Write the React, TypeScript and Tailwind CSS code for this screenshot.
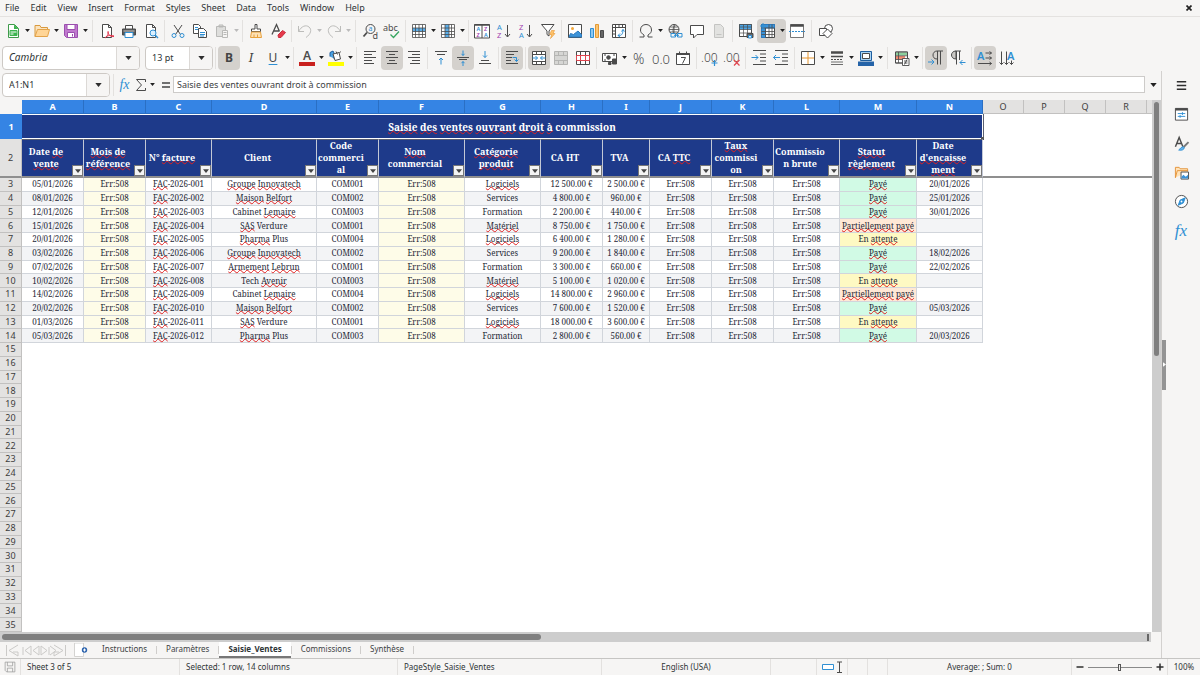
import clsx from "clsx";
import { useState } from "react";
import type { ReactNode } from "react";

const INK = "#4b4b4b";
const BLUE = "#2f8fd3";

const MENUS = ["File", "Edit", "View", "Insert", "Format", "Styles", "Sheet", "Data", "Tools", "Window", "Help"];
const TABS = ["Instructions", "Paramètres", "Saisie_Ventes", "Commissions", "Synthèse"];

// words between underscores get the spell-check wave
const COLUMNS = [
  { id: "A", width: "w-[62px]", title: "Date _de_ _vente_" },
  { id: "B", width: "w-[62px]", title: "_Mois_ _de_ _référence_" },
  { id: "C", width: "w-[66px]", title: "N° _facture_" },
  { id: "D", width: "w-[105px]", title: "Client" },
  { id: "E", width: "w-[62px]", title: "Code commercial" },
  { id: "F", width: "w-[86px]", title: "_Nom_ commercial" },
  { id: "G", width: "w-[76px]", title: "_Catégorie_ _produit_" },
  { id: "H", width: "w-[62px]", title: "CA HT" },
  { id: "I", width: "w-[47px]", title: "TVA" },
  { id: "J", width: "w-[62px]", title: "CA _TTC_" },
  { id: "K", width: "w-[62px]", title: "_Taux_ commission" },
  { id: "L", width: "w-[66px]", title: "Commission brute" },
  { id: "M", width: "w-[77px]", title: "_Statut_ _règlement_" },
  { id: "N", width: "w-[66px]", title: "Date _d'encaissement_" },
];
const EXTRA_COLUMNS = ["O", "P", "Q", "R"];

const SALES = [
  ["05/01/2026", "001", "_Groupe_ _Innovatech_", "COM001", "_Logiciels_", "12 500.00 €", "2 500.00 €", "_Payé_", "20/01/2026"],
  ["08/01/2026", "002", "_Maison_ _Belfort_", "COM002", "Services", "4 800.00 €", "960.00 €", "_Payé_", "25/01/2026"],
  ["12/01/2026", "003", "Cabinet _Lemaire_", "COM003", "Formation", "2 200.00 €", "440.00 €", "_Payé_", "30/01/2026"],
  ["15/01/2026", "004", "_SAS_ Verdure", "COM001", "_Matériel_", "8 750.00 €", "1 750.00 €", "_Partiellement_ _payé_", ""],
  ["20/01/2026", "005", "_Pharma_ Plus", "COM004", "_Logiciels_", "6 400.00 €", "1 280.00 €", "En _attente_", ""],
  ["03/02/2026", "006", "_Groupe_ _Innovatech_", "COM002", "Services", "9 200.00 €", "1 840.00 €", "_Payé_", "18/02/2026"],
  ["07/02/2026", "007", "_Armement_ _Lebrun_", "COM001", "Formation", "3 300.00 €", "660.00 €", "_Payé_", "22/02/2026"],
  ["10/02/2026", "008", "Tech _Avenir_", "COM003", "_Matériel_", "5 100.00 €", "1 020.00 €", "En _attente_", ""],
  ["14/02/2026", "009", "Cabinet _Lemaire_", "COM004", "_Logiciels_", "14 800.00 €", "2 960.00 €", "_Partiellement_ _payé_", ""],
  ["20/02/2026", "010", "_Maison_ _Belfort_", "COM002", "Services", "7 600.00 €", "1 520.00 €", "_Payé_", "05/03/2026"],
  ["01/03/2026", "011", "_SAS_ Verdure", "COM001", "_Logiciels_", "18 000.00 €", "3 600.00 €", "En _attente_", ""],
  ["05/03/2026", "012", "_Pharma_ Plus", "COM003", "Formation", "2 800.00 €", "560.00 €", "_Payé_", "20/03/2026"],
];

const EMPTY_ROWS = Array.from({ length: 21 }, (_, i) => i + 15);

const STATUS_COLORS: Record<string, string> = {
  _Payé_: "bg-[#d1fae5]",
  "En _attente_": "bg-[#fef9c3]",
  "_Partiellement_ _payé_": "bg-[#ffe8d6]",
};

const page = <path d="M3.5 1.5h6l3 3v10h-9z M9.5 1.5v3h3" fill="#fff" />;

const ICONS: Record<string, ReactNode> = {
  new: (
    <>
      <path d="M3.500 1.500h6l4 4v9h-10z" fill="#fff" stroke="#3f9a4b" />
      <path d="M9 1.500l4.500 4.500H9z" fill="#3cb44e" stroke="none" />
      <path d="M5 7.500h7v5H5z" fill="#3cb44e" stroke="#3cb44e" />
      <path d="M5.500 9h6M5.500 11h3" stroke="#fff" />
    </>
  ),
  open: (
    <>
      <path d="M1 13.500v-11h5l1 2h6.500v2" fill="#fbe3bd" stroke="#d99a3e" />
      <path d="M1 13.500l2.500-7H15.500l-2 7z" fill="#ffd596" stroke="#e3a349" />
    </>
  ),
  save: (
    <>
      <path d="M1.500 1.500h13v13h-11l-2-2z" fill="#c079ce" stroke="#9b4fae" />
      <path d="M4 1.500h8v5H4z M4.500 9.500h7v5h-7z" fill="#fff" stroke="#9b4fae" />
      <path d="M9.500 11v2.500" stroke="#9b4fae" />
    </>
  ),
  pdf: (
    <>
      {page}
      <path d="M6 15c3-2 3.500-5 3-7M9 9c0 3 3 5 6 4.500M6 15c1-2 5-3.500 9-2" stroke="#e3324a" />
    </>
  ),
  print: (
    <>
      <path d="M4.500 6V2.500h7V6" fill="#fff" />
      <path d="M1.500 6h13v6h-13z" fill="#5a5a5a" />
      <path d="M4 9.500h8v5H4z" fill="#fff" stroke={BLUE} />
      <path d="M2.500 8h11" stroke="#c8c8c8" />
    </>
  ),
  preview: (
    <>
      {page}
      <circle cx="10" cy="10" r="3" fill="#d9efff" stroke={BLUE} />
      <path d="M12.300 12.300L15 15" stroke={BLUE} strokeWidth="1.500" />
    </>
  ),
  cut: (
    <>
      <path d="M4 2l6.500 9.500M12 2L5.500 11.500" />
      <circle cx="4" cy="12.500" r="2" stroke={BLUE} />
      <circle cx="12" cy="12.500" r="2" stroke={BLUE} />
    </>
  ),
  copy: (
    <>
      <path d="M1.500 1.500h5l2 2v7h-7z" fill="#fff" />
      <path d="M3 4.500h3M3 6.500h3" stroke={BLUE} />
      <path d="M6.500 5.500h5l3 3v6h-8z" fill="#fff" />
      <path d="M8 9.500h5M8 11.500h5M8 13h4" stroke={BLUE} />
    </>
  ),
  paste: (
    <g stroke="#b9b9b7">
      <path d="M2.500 3.500h9v10h-9z M5 2h4v2H5z" fill="#dededc" />
      <path d="M8.500 7.500h5v7h-5z M9.500 9.500h3M9.500 11.500h3" fill="#f6f5f4" />
    </g>
  ),
  clone: (
    <>
      <path d="M7 1.500h2v4.500h3.500v2.500h-9V6H7z" fill="#fff" />
      <path d="M3.500 9h9l1 5.500H2.500z" fill="#fde1b5" stroke="#e8a13c" />
      <path d="M6 14v-2.500M9.500 14v-2.500" stroke="#e8a13c" />
    </>
  ),
  clear: (
    <>
      <path d="M2 11.500L6.500 1.500l3 7M3.800 8h5" strokeWidth="1.300" />
      <path d="M8 12l4.500-4.500 3 2L11 14.500H8.500z" fill="#e5394b" stroke="#c92f40" />
    </>
  ),
  undo: <path d="M1.500 3v5.500h5.500M1.500 8.500C4.500 3 9 1.500 12 4s2 7-3 10.500" stroke="#bcbcba" />,
  redo: <path d="M14.500 3v5.500H9M14.500 8.500C11.500 3 7 1.500 4 4s-2 7 3 10.500" stroke="#bcbcba" />,
  find: (
    <>
      <circle cx="8.500" cy="6" r="4.500" />
      <path d="M5 9.500L1.500 13.500" strokeWidth="1.800" />
      <text x="6.500" y="8.300" fontSize="7" fill={BLUE} stroke="none">a</text>
      <text x="10.500" y="15.500" fontSize="9" fill={INK} stroke="none">d</text>
    </>
  ),
  spell: (
    <>
      <text x="-1" y="7.500" fontSize="9" fill={INK} stroke="none">abc</text>
      <path d="M6.500 11.500l3 3 5.500-6" stroke="#37a660" strokeWidth="1.300" />
    </>
  ),
  row: (
    <>
      <path d="M1.500 1.500h13v13h-13z" fill="#fff" stroke="none" />
      <path d="M1.500 5h13v3.500h-13z" fill="#5aaeea" stroke="none" />
      <path d="M1.500 1.500h13v13h-13z M1.500 5h13 M1.500 8.500h13 M1.500 11.500h13 M4.500 1.500v13 M8 1.500v13 M11.500 1.500v13" strokeWidth=".8" />
    </>
  ),
  col: (
    <>
      <path d="M1.500 1.500h13v13h-13z" fill="#fff" stroke="none" />
      <path d="M5 1.500h4v13H5z" fill="#5aaeea" stroke="none" />
      <path d="M1.500 1.500h13v13h-13z M1.500 5h13 M1.500 8.500h13 M1.500 11.500h13 M5 1.500v13 M9 1.500v13 M11.500 1.500v13" strokeWidth=".8" />
    </>
  ),
  sort: (
    <>
      <path d="M.500 1.500h15v13.500H.500z M8 2v13" fill="#fff" />
      <path d="M.500 2h15" strokeWidth="1.500" />
      <g fontSize="5.500" fontWeight="600" stroke="none">
        <text x="2.500" y="8" fill={BLUE}>A</text>
        <text x="2.500" y="14" fill="#a13fb0">Z</text>
        <text x="10" y="8" fill="#a13fb0">Z</text>
        <text x="10" y="14" fill={BLUE}>A</text>
      </g>
    </>
  ),
  az: (
    <>
      <text x="1" y="7" fontSize="7.500" fill={BLUE} stroke="none">A</text>
      <text x="1" y="15" fontSize="7.500" fill="#a13fb0" stroke="none">Z</text>
      <path d="M11.500 2v11.500M9 11l2.500 3 2.500-3" />
    </>
  ),
  za: (
    <>
      <text x="1" y="7" fontSize="7.500" fill="#a13fb0" stroke="none">Z</text>
      <text x="1" y="15" fontSize="7.500" fill={BLUE} stroke="none">A</text>
      <path d="M11.500 2v11.500M9 11l2.500 3 2.500-3" />
    </>
  ),
  filter: (
    <>
      <path d="M1.500 1.500h12.500l-5 6.500v5l-2-1.500V8z" fill="#fff" />
      <path d="M11.500 7.500h3l-1.500 3h2l-4.500 5 1.300-4H9.800z" fill="#ffc36b" stroke="#e8962e" strokeWidth=".6" />
    </>
  ),
  image: (
    <>
      <path d="M1.500 1.500h13v13h-13z" fill="#fff" />
      <circle cx="5.500" cy="5.500" r="1.500" fill="#f2a73b" stroke="none" />
      <path d="M2 14l1.500-3.500 3 1L11 8l3.500 3.500V14z" fill="#3c93d8" stroke="#2a7abf" />
    </>
  ),
  chart: (
    <>
      <path d="M1.500 5.500h3v9h-3z" fill="#8cc8f2" stroke={BLUE} />
      <path d="M6.500 1.500h3v13h-3z" fill="#fbc573" stroke="#e39a35" />
      <path d="M11.500 7.500h3v7h-3z" fill="#666" />
    </>
  ),
  pivot: (
    <>
      <path d="M1.500 1.500h13v13h-13z M1.500 4.500h13 M4.500 1.500v13 M8 1.500v3 M11.500 1.500v3 M1.500 8h3 M1.500 11h3" fill="#fff" />
      <path d="M7 12.500c4 .5 5-2 5-6M7 12.500l2-2M7 12.500l2 1.500M12 6.500L10.500 8.500M12 6.500l1.500 2" stroke={BLUE} />
    </>
  ),
  omega: <path d="M1.500 14h4.500v-2C3.500 10.500 2.500 9 2.500 7c0-3.500 2.500-5.500 5.500-5.500S13.500 3.500 13.500 7c0 2-1 3.500-3.500 5v2h4.500" />,
  link: (
    <>
      <circle cx="7" cy="6.500" r="5" />
      <path d="M2 6.500h10M7 1.500v10M3 4h8M3 9h8" strokeWidth=".8" />
      <path d="M8.500 1.800c-3 3-3 6.500-1.500 9.500" strokeWidth=".8" />
      <path d="M4 10.500h4.500v3.500H4zM10.500 10.500H15v3.500h-4.500zM7 12.300h5" fill="#f6f5f4" stroke={BLUE} />
    </>
  ),
  comment: <path d="M1.500 2.500h13v9H8l-3.500 3.500v-3.500h-3z" fill="#fff" />,
  headers: <path d="M3.500 1.500h6l3 3v10h-9z M5.500 11.500h5" fill="#e2e2e0" stroke="#c4c4c2" />,
  printarea: (
    <>
      <path d="M1.500 1.500h12v12h-12z" fill="#fff" />
      <path d="M1.500 1.500h12v5h-12z" fill="#4ba3e3" stroke="none" />
      <path d="M1.500 1.500h12v12h-12z M1.500 4h12 M1.500 6.500h12 M1.500 10h12 M5.500 1.500v12 M9.500 1.500v12" strokeWidth=".7" />
      <path d="M9 10.500h6v4H9z" fill="#666" />
      <path d="M10.500 12.500h3v2.500h-3z" fill="#d9efff" stroke={BLUE} />
    </>
  ),
  freeze: (
    <>
      <path d="M1.500 1.500h13v13h-13z" fill="#fff" />
      <path d="M1.500 1.500h13v3.500H5.500v9.500h-4z" fill="#3c93d8" stroke="#2a7abf" />
      <path d="M5.500 5v9.500M9 1.500v13M12 1.500v13M1.500 5h13M1.500 8.500h13M1.500 11.500h13" strokeWidth=".8" />
      <path d="M3 0v6M0 3h6" stroke={BLUE} />
    </>
  ),
  split: (
    <>
      <path d="M1.500 1.500h13v13h-13z" fill="#fff" stroke="#777" />
      <path d="M1.500 2.500h13" strokeWidth="2.500" />
      <path d="M0 8.500h16" stroke={BLUE} strokeDasharray="2 1" />
    </>
  ),
  shapes: (
    <>
      <circle cx="10.500" cy="5.500" r="4" fill="#fff" />
      <path d="M1.500 5.500h7v7h-7z" fill="#fff" />
      <path d="M9.500 6l4.500 4.500L9.500 15 5 10.500z" fill="#fff" />
    </>
  ),
  alignleft: <path d="M2 1.500h12M2 4.500h8M2 7.500h12M2 10.500h8M2 13.500h10" />,
  aligncenter: <path d="M2 1.500h12M5 4.500h6M2 7.500h12M5 10.500h6M3 13.500h10" />,
  alignright: <path d="M2 1.500h12M6 4.500h8M2 7.500h12M6 10.500h8M4 13.500h10" />,
  top: (
    <>
      <path d="M2 1.500h12M4 4.500h8" />
      <path d="M8 14.500V8M6 10l2-2 2 2" stroke={BLUE} />
    </>
  ),
  middle: (
    <>
      <path d="M2 7.500h12M4 9.500h8" />
      <path d="M8 .500v5M6.500 3.800L8 5.500l1.500-1.700M8 16v-4.500M6.500 13.200L8 11.500l1.500 1.700" stroke={BLUE} />
    </>
  ),
  bottom: (
    <>
      <path d="M2 13.500h12M4 10.500h8" />
      <path d="M8 1v6.500M6 5.500l2 2 2-2" stroke={BLUE} />
    </>
  ),
  wrap: (
    <>
      <path d="M2 1.500h12M2 4.500h8M2 7.500h6M2 10.500h5M2 13.500h12" />
      <path d="M8.500 7.500h4v4M10.500 9.500l2 2 2-2" stroke={BLUE} />
    </>
  ),
  mergecenter: (
    <>
      <path d="M1.500 1.500h13v13h-13z M1.500 4.500h13 M1.500 11.500h13 M5.500 1.500v3 M10.500 1.500v3 M5.500 11.500v3 M10.500 11.500v3" fill="#fff" />
      <path d="M1.500 8h5M9.500 8h5M4.500 6l2 2-2 2M11.500 6l-2 2 2 2" stroke={BLUE} />
    </>
  ),
  merge: <path d="M1.500 1.500h13v13h-13z M1.500 5.500h13 M1.500 10.500h13 M5.500 1.500v4 M10.500 1.500v4 M5.500 10.500v4 M10.500 10.500v4" fill="#d6d6d4" stroke="#b5b5b3" />,
  unmerge: (
    <>
      <path d="M1.500 1.500h13v13h-13z M5.500 1.500v4 M10.500 1.500v4" fill="#fff" />
      <path d="M1.500 5.500h13v5h-13z M5.500 5.500v5M10.500 5.500v5" stroke="#e0454f" />
      <path d="M5.500 11v3.500M10.500 11v3.500" />
    </>
  ),
  currency: (
    <>
      <path d="M.500 3.500h14v8H.500z" fill="#fff" />
      <circle cx="6.500" cy="7.500" r="1.800" fill={INK} />
      <path d="M10.500 9h4v5h-4z M6.500 12.500h2.500v2H6.500z" fill={INK} />
      <path d="M2 5h2M11 5h2M2 10h2" />
    </>
  ),
  percent: <text x="2" y="13.500" fontSize="14" fontWeight="300" fill={INK} stroke="none">%</text>,
  number: <text x="-1" y="13.500" fontSize="13" fontWeight="300" fill={INK} stroke="none">0.0</text>,
  date: (
    <>
      <path d="M1.500 3.500h13v11h-13z M4.500 1.500v2 M11.500 1.500v2" fill="#fff" />
      <path d="M1.500 4h13" strokeWidth="2" />
      <path d="M6 7.500h4.500l-3 6" />
    </>
  ),
  adddec: (
    <>
      <text x="-1" y="12" fontSize="12" fontWeight="300" fill={INK} stroke="none">.00</text>
      <path d="M12.500 10v6M9.500 13h6" stroke={BLUE} strokeWidth="1.200" />
    </>
  ),
  deldec: (
    <>
      <text x="-1" y="12" fontSize="12" fontWeight="300" fill={INK} stroke="none">.00</text>
      <path d="M10 10l5.500 5.500M15.500 10L10 15.500" stroke="#e0454f" strokeWidth="1.200" />
    </>
  ),
  indent: (
    <>
      <path d="M2 .500h13M9 4h6M9 7.500h6M9 11h6M2 14.500h13" />
      <path d="M.500 7.500h6.500M4.500 5l2.500 2.500L4.500 10" stroke={BLUE} />
    </>
  ),
  dedent: (
    <>
      <path d="M2 .500h13M9 4h6M9 7.500h6M9 11h6M2 14.500h13" />
      <path d="M.500 7.500h6.500M3 5L.500 7.500 3 10" stroke={BLUE} />
    </>
  ),
  borders: (
    <>
      <path d="M1.500 1.500h13v13h-13z" fill="#fff" />
      <path d="M8 2v12M2 8h12" stroke="#e8962e" />
    </>
  ),
  linestyle: (
    <>
      <path d="M2 2.500h12" strokeWidth="2.500" />
      <path d="M2 6.500h12" strokeWidth="1.500" />
      <path d="M2 9.500h12" strokeDasharray="2 1" />
      <path d="M2 12h12M2 14.500h12" strokeWidth=".8" />
    </>
  ),
  linecolor: (
    <>
      <path d="M2.500 1.500h11v9h-11z" fill="#a9d4f5" stroke="#1d5d9e" />
      <path d="M4.500 3.500h7v5h-7z" fill="#fff" />
      <path d="M0 11.500h16V16H0z" fill="#2563a8" stroke="none" />
    </>
  ),
  conditional: (
    <>
      <path d="M1.500 2h12v11h-12z" fill="#fff" />
      <path d="M2 2.500h11v3H2z" fill="#8ccf9b" stroke="none" />
      <path d="M2 6h9v3.500H2z" fill="#f08a72" stroke="none" />
      <path d="M1.500 2h12v11h-12z M1.500 5.800h12 M1.500 9.500h12 M4.500 2v11" strokeWidth=".8" />
      <path d="M8.500 8.500h6.500v7H8.500z M10 11h3.500M10 13h3.500M13 9.500l-2.500 5" fill="#fff" strokeWidth=".9" />
    </>
  ),
  ltr: (
    <>
      <path d="M9 9C6 9 5 7 5 5s1.500-4 4-4h6M9.500 1v13.500M12.500 1v13.500" />
      <path d="M0 12h6M3.500 9.500L6 12l-2.500 2.500" stroke={BLUE} />
    </>
  ),
  rtl: (
    <>
      <path d="M6 1v8C3 9 1.500 7 1.500 5S3 1 6 1z" fill="#c9c7c4" />
      <path d="M5.500 1H11M6.500 1v13.500M9.500 1v9" />
      <path d="M10 12.500h5.500M12.500 10L10 12.500l2.500 2.500" stroke={BLUE} />
    </>
  ),
  horizontaltext: (
    <>
      <text x="0" y="9.500" fontSize="11" fontWeight="600" fill={BLUE} stroke="none">A</text>
      <path d="M8.500 3h6M8.500 8h6M1 13.500h13.500M12.500 1.500L14.500 3l-2 1.500M12.500 6.500l2 1.500-2 1.500M12.500 12l2 1.500-2 1.500" />
    </>
  ),
  verticaltext: (
    <>
      <text x="8" y="9.500" fontSize="11" fontWeight="600" fill={BLUE} stroke="none">A</text>
      <path d="M2.500 1.500v13M7.500 1.500v13M12.500 10.500v4M.500 12.500l2 2 2-2M5.500 12.500l2 2 2-2M10.500 12.500l2 2 2-2" />
    </>
  ),
  fontcolor: (
    <>
      <text x="4" y="10" fontSize="12" fontWeight="600" fill={INK} stroke="none">A</text>
      <path d="M0 12h16v4H0z" fill="#c9211e" stroke="none" />
    </>
  ),
  highlight: (
    <>
      <path d="M2 6.500V2.500l3-1.500 1 2v5.500" stroke="#1d5d9e" fill="#4ba3e3" />
      <path d="M5 4l6-1.500 1.500 6.500L7 10.500z M8 1.500l1.500 3 M11.500 3l1-1.500" fill="#fff" />
      <path d="M0 12h16v4H0z" fill="#ffff00" stroke="none" />
    </>
  ),
  hamburger: <path d="M3 4h10M3 8h10M3 12h10" stroke="#2e2e2e" strokeWidth="1.500" />,
  properties: (
    <>
      <path d="M1.500 1.500h13v12.500h-13z" fill="#fff" />
      <path d="M1.500 2.500h13" strokeWidth="2.500" />
      <path d="M4 7h8M4 10h8M9 5.500v3M6.500 8.500v3" stroke={BLUE} />
    </>
  ),
  styles: (
    <>
      <path d="M1.500 11.500L5.500 1.500l4 10M3 8h5" strokeWidth="1.500" />
      <path d="M15.500 6.500l-6 6" stroke="#777" strokeWidth="2" />
      <path d="M10 11.500c-2.500 0-3 2-5 3.500 3 .5 5.500 0 6-2.500z" fill="#6bb6ec" stroke={BLUE} />
    </>
  ),
  gallery: (
    <>
      <path d="M1.500 13.500v-11h4l1 1.500h8v3M1.500 13.500L3.500 6h11.500" fill="#ffe2b8" stroke="#e3933a" />
      <path d="M7.500 7.500h8v7.500h-8z" fill="#fff" />
      <path d="M8 14.500v-2l2-2 2.500 2 2.500-2v4z" fill="#3c93d8" stroke="none" />
    </>
  ),
  navigator: (
    <>
      <circle cx="8" cy="8" r="6.500" fill="#fff" />
      <path d="M12 4l-2 5.500L4.500 12l2-5.500z" fill={BLUE} stroke={BLUE} />
      <circle cx="8" cy="8" r="1" fill="#fff" stroke="none" />
    </>
  ),
  floppy: <path d="M1.500 1.500h13v13h-11l-2-2zM4.500 1.500v5h7v-5M4.500 14.500v-5h7v5" stroke="#999" />,
};

type ToolDef = { icon: string; label: string; caret?: boolean; active?: boolean; disabled?: boolean };
const sep = (wide = false) => ({ sep: true as const, wide });

const STANDARD: (ToolDef | { sep: true; wide: boolean })[] = [
  { icon: "new", label: "New", caret: true },
  { icon: "open", label: "Open", caret: true },
  { icon: "save", label: "Save", caret: true },
  sep(true),
  { icon: "pdf", label: "Export as PDF" },
  { icon: "print", label: "Print" },
  { icon: "preview", label: "Print preview" },
  sep(),
  { icon: "cut", label: "Cut" },
  { icon: "copy", label: "Copy" },
  { icon: "paste", label: "Paste", caret: true, disabled: true },
  sep(),
  { icon: "clone", label: "Clone formatting" },
  { icon: "clear", label: "Clear formatting" },
  sep(),
  { icon: "undo", label: "Undo", caret: true, disabled: true },
  { icon: "redo", label: "Redo", caret: true, disabled: true },
  sep(true),
  { icon: "find", label: "Find and replace" },
  { icon: "spell", label: "Spelling" },
  sep(),
  { icon: "row", label: "Row", caret: true },
  { icon: "col", label: "Column", caret: true },
  sep(),
  { icon: "sort", label: "Sort" },
  { icon: "az", label: "Sort ascending" },
  { icon: "za", label: "Sort descending" },
  { icon: "filter", label: "AutoFilter" },
  sep(),
  { icon: "image", label: "Insert image" },
  { icon: "chart", label: "Insert chart" },
  { icon: "pivot", label: "Pivot table" },
  sep(),
  { icon: "omega", label: "Special character", caret: true },
  { icon: "link", label: "Hyperlink" },
  { icon: "comment", label: "Comment" },
  { icon: "headers", label: "Headers and footers", disabled: true },
  sep(),
  { icon: "printarea", label: "Define print area" },
  { icon: "freeze", label: "Freeze rows and columns", caret: true, active: true },
  { icon: "split", label: "Split window" },
  sep(true),
  { icon: "shapes", label: "Draw functions" },
];

const FORMATTING: typeof STANDARD = [
  { icon: "fontcolor", label: "Font color", caret: true },
  { icon: "highlight", label: "Background color", caret: true },
  sep(),
  { icon: "alignleft", label: "Align left" },
  { icon: "aligncenter", label: "Align center", active: true },
  { icon: "alignright", label: "Align right" },
  sep(),
  { icon: "top", label: "Align top" },
  { icon: "middle", label: "Center vertically", active: true },
  { icon: "bottom", label: "Align bottom" },
  sep(),
  { icon: "wrap", label: "Wrap text", active: true },
  sep(),
  { icon: "mergecenter", label: "Merge and center cells", active: true },
  { icon: "merge", label: "Merge cells", disabled: true },
  { icon: "unmerge", label: "Unmerge cells" },
  sep(),
  { icon: "currency", label: "Currency", caret: true },
  { icon: "percent", label: "Percent" },
  { icon: "number", label: "Number" },
  { icon: "date", label: "Date" },
  sep(),
  { icon: "adddec", label: "Add decimal place" },
  { icon: "deldec", label: "Delete decimal place" },
  sep(),
  { icon: "indent", label: "Increase indent" },
  { icon: "dedent", label: "Decrease indent" },
  sep(),
  { icon: "borders", label: "Borders", caret: true },
  { icon: "linestyle", label: "Border style", caret: true },
  { icon: "linecolor", label: "Border color", caret: true },
  sep(true),
  { icon: "conditional", label: "Conditional formatting", caret: true },
  sep(),
  { icon: "ltr", label: "Left-to-right", active: true },
  { icon: "rtl", label: "Right-to-left" },
  sep(),
  { icon: "horizontaltext", label: "Text direction from left to right", active: true },
  { icon: "verticaltext", label: "Text direction from top to bottom" },
];

function Icon({ name, className = "w-4 h-4" }: { name: string; className?: string }) {
  return (
    <svg viewBox="0 0 16 16" className={clsx("shrink-0 overflow-visible", className)} fill="none" stroke={INK} aria-hidden="true">
      {ICONS[name]}
    </svg>
  );
}

function Caret({ className = "w-[5px] h-[3px] text-[#222]" }: { className?: string }) {
  return (
    <svg viewBox="0 0 8 5" className={clsx("shrink-0", className)} fill="currentColor" aria-hidden="true">
      <path d="M0 0h8L4 5z" />
    </svg>
  );
}

function Tool({ icon, label, caret, active, disabled }: ToolDef) {
  return (
    <div className={clsx("flex items-center rounded-sm", active && "bg-[#d4d1cd]")}>
      <button type="button" aria-label={label} disabled={disabled} className="w-[22px] h-6 flex items-center justify-center">
        <Icon name={icon} />
      </button>
      {caret && (
        <button type="button" aria-label={`${label} options`} disabled={disabled} className="w-[7px] h-6 flex items-center justify-center">
          <Caret className={clsx("w-[5px] h-[3px]", disabled ? "text-[#bbb]" : "text-[#222]")} />
        </button>
      )}
    </div>
  );
}

function Separator({ wide }: { wide?: boolean }) {
  return (
    <div className={clsx("flex justify-center", wide ? "w-[7px]" : "w-[5px]")}>
      <div className="w-px h-[22px] bg-[#e3e1df]" />
    </div>
  );
}

function Tools({ items }: { items: typeof STANDARD }) {
  return (
    <>
      {items.map((item, i) => ("sep" in item ? <Separator key={i} wide={item.wide} /> : <Tool key={item.icon} {...item} />))}
    </>
  );
}

function Combo({ label, value, width, italic }: { label: string; value: string; width: string; italic?: boolean }) {
  return (
    <div className={clsx("flex h-6 border border-[#cdc9c5] rounded bg-white overflow-hidden", width)}>
      <input
        aria-label={label}
        defaultValue={value}
        className={clsx("flex-1 min-w-0 px-[6px] text-[#2e3436] outline-none", italic ? "italic text-[10px]" : "text-[9px]")}
      />
      <button type="button" aria-label={`${label} list`} className="w-[23px] flex items-center justify-center border-l border-[#dcd9d6] bg-[#f6f5f4]">
        <Caret className="w-[7px] h-[4px] text-[#2e2e2e]" />
      </button>
    </div>
  );
}

function Spelled({ text }: { text: string }) {
  return (
    <>
      {text.split("_").map((part, i) =>
        i % 2 ? (
          <span key={i} className="underline decoration-wavy decoration-[#e02020] decoration-1 [text-underline-offset:-1px] [text-decoration-skip-ink:none]">
            {part}
          </span>
        ) : (
          part
        )
      )}
    </>
  );
}

function RowNumber({ n }: { n: number }) {
  return (
    <th scope="row" className="p-0 bg-[#e3e2e1] border-b border-r border-[#c2c1c0] font-normal font-['Noto_Sans',sans-serif] text-[9px] leading-[12px] text-[#3d3d3d]">
      {n}
    </th>
  );
}

function Sheet() {
  return (
    <table className="w-full h-full table-fixed border-separate border-spacing-0 bg-white text-center">
      <colgroup>
        <col className="w-[22px]" />
        {COLUMNS.map((c) => (
          <col key={c.id} className={c.width} />
        ))}
        {EXTRA_COLUMNS.map((c) => (
          <col key={c} className="w-[41px]" />
        ))}
        <col />
      </colgroup>
      <thead className="text-[9px] leading-[13px]">
        <tr className="h-[14px]">
          <td className="p-0 bg-[#f6f5f4]" />
          {COLUMNS.map((c) => (
            <th key={c.id} scope="col" className="p-0 bg-[#3584e4] border-r border-b border-[#2a6fc4] text-white font-bold">{c.id}</th>
          ))}
          {EXTRA_COLUMNS.map((c) => (
            <th key={c} scope="col" className="p-0 bg-[#e3e2e1] border-r border-b border-[#c2c1c0] font-normal text-[#3d3d3d]">{c}</th>
          ))}
          <td className="p-0 bg-[#e3e2e1] border-b border-[#c2c1c0]" />
        </tr>
      </thead>
      <tbody className="font-['Noto_Serif','DejaVu_Serif_Condensed','DejaVu_Serif',serif] text-[8px] leading-[12px] text-[#1f2937]">
        <tr className="h-[25px]">
          <th scope="row" className="p-0 bg-[#3584e4] text-white font-bold font-['Noto_Sans',sans-serif] text-[9px]">1</th>
          <td colSpan={14} className="p-0 relative bg-[#1e3a8a] border-y border-r border-white text-white font-bold text-[10px]">
            <Spelled text="_Saisie_ _des_ _ventes_ _ouvrant_ _droit_ _à_ commission" />
            <span className="absolute -right-0.5 -bottom-0.5 size-[3px] bg-[#555]" />
          </td>
          <td colSpan={5} className="p-0 border-l border-[#5b6070]" />
        </tr>
        <tr className="h-[38px]">
          <th scope="row" className="p-0 bg-[#e3e2e1] border-r border-b-2 border-[#8f8f8f] border-r-[#c2c1c0] font-normal font-['Noto_Sans',sans-serif] text-[9px] text-[#3d3d3d]">2</th>
          {COLUMNS.map((c) => (
            <th key={c.id} scope="col" className="p-0 relative bg-[#1e3a8a] border-r border-t border-b-2 border-[#8f8f8f] border-t-[#5b6070] border-r-[#c3c8d6] text-white text-[9px] leading-[12px]">
              <div className="pr-[13px] wrap-break-word">
                <Spelled text={c.title} />
              </div>
              <button type="button" aria-label={`Filter column ${c.id}`} className="absolute right-0 bottom-0 size-[11px] flex items-center justify-center bg-[#f4f4f4] border border-[#777]">
                <Caret className="w-[6px] h-[4px] text-[#444]" />
              </button>
            </th>
          ))}
          <td colSpan={5} className="p-0 border-b-2 border-[#8f8f8f]" />
        </tr>
        {SALES.map(([date, ref, client, code, category, ht, tva, status, paid], i) => {
          const cells = [date, "Err:508", `_FAC_-2026-${ref}`, client, code, "Err:508", category, ht, tva, "Err:508", "Err:508", "Err:508", status, paid];
          return (
            <tr key={ref} className={clsx(i % 2 && "bg-[#f3f4f6]")}>
              <RowNumber n={i + 3} />
              {cells.map((text, col) => (
                <td
                  key={col}
                  className={clsx(
                    "p-0 border-r border-b border-[#d1d5db] whitespace-nowrap",
                    (col === 1 || col === 5) && "bg-[#fefce8]",
                    col === 12 && STATUS_COLORS[status]
                  )}
                >
                  <Spelled text={text} />
                </td>
              ))}
              <td colSpan={5} className="p-0 bg-white" />
            </tr>
          );
        })}
        {EMPTY_ROWS.map((n) => (
          <tr key={n}>
            <RowNumber n={n} />
            <td colSpan={19} className="p-0" />
          </tr>
        ))}
      </tbody>
    </table>
  );
}

function SheetTabs({ current, onSelect }: { current: string; onSelect: (tab: string) => void }) {
  return (
    <nav className="flex h-4 shrink-0 pl-[6px]">
      <button type="button" aria-label="Scroll sheets" className="w-[62px]">
        <svg viewBox="0 0 62 14" className="w-[62px] h-[14px]" fill="none" stroke="#cbcac8" aria-hidden="true">
          <path d="M.5 2v11M12 2L3 7.500l9 5.500V9H7M17 4v8M25 3l-6 4.500 6 4.500zM33 3l-6 4.500 6 4.500zM35 3l6 4.500-6 4.500zM43 4v8M44 3l6 4.500-6 4.500M48 2l9 5.500L48 13V9h5M59.500 2v11" />
        </svg>
      </button>
      <button type="button" aria-label="Add sheet" className="w-[25px] pl-[6px]">
        <svg viewBox="0 0 14 14" className="size-[14px]" aria-hidden="true">
          <path d="M.5 0h9v13.500H.5z" fill="#fff" stroke="#d4d3d1" />
          <circle cx="10.500" cy="7" r="2.700" fill="#2a62ad" />
          <path d="M10.500 5.500v3M9 7h3" stroke="#fff" />
        </svg>
      </button>
      {TABS.map((tab) => (
        <div key={tab} className="flex items-center">
          <button
            type="button"
            onClick={() => onSelect(tab)}
            className={clsx(
              "h-4 px-[9px] text-[8px] leading-[14px]",
              tab === current ? "bg-white font-bold border-b-2 border-[#777] text-[#2e3436]" : "pb-0.5 text-[#3d4244]"
            )}
          >
            {tab}
          </button>
          <div className="w-px h-2 bg-[#cfcdcb]" />
        </div>
      ))}
    </nav>
  );
}

function StatusBar() {
  return (
    <footer className="flex items-stretch h-[17px] shrink-0 border-t border-[#c6c5c3] text-[8px] leading-4 whitespace-nowrap [&>div]:border-r [&>div]:border-[#e3e1df]">
      <div className="w-[21px] flex items-center justify-center">
        <Icon name="floppy" className="size-3" />
      </div>
      <div className="w-[159px] pl-[6px]">Sheet 3 of 5</div>
      <div className="w-[218px] pl-[6px]">Selected: 1 row, 14 columns</div>
      <div className="flex-1 pl-[6px]">PageStyle_Saisie_Ventes</div>
      <div className="w-[169px] text-center">English (USA)</div>
      <div className="w-[46px]" />
      <div className="w-[31px] flex items-center justify-center">
        <svg viewBox="0 0 20 12" className="w-5 h-3" fill="none" aria-hidden="true">
          <path d="M.5 3.500h11v5H.5z" stroke={BLUE} fill="#fff" />
          <path d="M15 1h5M17.500 1v10.500M15 11.500h5" stroke={INK} />
        </svg>
      </div>
      <div className="w-5" />
      <div className="w-5" />
      <div className="w-[184px] text-center">Average: ; Sum: 0</div>
      <div className="w-24 flex items-center justify-center gap-1">
        <button type="button" aria-label="Zoom out">
          <svg viewBox="0 0 8 8" className="size-2" stroke="#2e2e2e" strokeWidth="1.500" aria-hidden="true"><path d="M.5 4h7" /></svg>
        </button>
        <input
          type="range"
          aria-label="Zoom"
          defaultValue={50}
          className="w-[64px] h-2 appearance-none bg-transparent [&::-webkit-slider-runnable-track]:h-px [&::-webkit-slider-runnable-track]:bg-[#8a8a8a] [&::-webkit-slider-thumb]:appearance-none [&::-webkit-slider-thumb]:w-[3px] [&::-webkit-slider-thumb]:h-[7px] [&::-webkit-slider-thumb]:-mt-[3px] [&::-webkit-slider-thumb]:bg-[#eee] [&::-webkit-slider-thumb]:border [&::-webkit-slider-thumb]:border-[#555]"
        />
        <button type="button" aria-label="Zoom in">
          <svg viewBox="0 0 8 8" className="size-2" stroke="#2e2e2e" strokeWidth="1.500" aria-hidden="true"><path d="M.5 4h7M4 .5v7" /></svg>
        </button>
      </div>
      <span className="w-8 text-center">100%</span>
    </footer>
  );
}

export default function App() {
  const [tab, setTab] = useState("Saisie_Ventes");

  return (
    <div className="h-screen flex flex-col bg-[#f6f5f4] overflow-hidden font-['Noto_Sans',sans-serif] text-[#2e3436]">
      <header className="flex items-center justify-between h-[17px] shrink-0 border-b border-[#e4e2e0] text-[9px]">
        <div className="flex gap-px">
          {MENUS.map((menu) => (
            <button key={menu} type="button" className="px-[5px]">{menu}</button>
          ))}
        </div>
        <button type="button" aria-label="Close document" className="px-2">
          <svg viewBox="0 0 6 6" className="size-[6px]" stroke="#222" strokeWidth="1.700" aria-hidden="true"><path d="M.5.5l5 5M5.500.5l-5 5" /></svg>
        </button>
      </header>

      <div className="flex items-center h-[27px] pl-[2px] shrink-0">
        <Tools items={STANDARD} />
      </div>
      <div className="flex items-center h-[27px] pl-[2px] shrink-0">
        <Combo label="Font name" value="Cambria" width="w-[138px]" italic />
        <div className="w-[5px]" />
        <Combo label="Font size" value="13 pt" width="w-[68px]" />
        <Separator />
        <button type="button" className="w-[22px] h-6 rounded-sm bg-[#d4d1cd] text-[12px] font-bold text-[#444]">B</button>
        <button type="button" className="w-[22px] h-6 font-['Noto_Serif','Liberation_Serif',serif] text-[12px] italic text-[#444]">I</button>
        <button type="button" className="w-[22px] h-6 text-[12px] text-[#444] underline decoration-[#2f8fd3] underline-offset-2">U</button>
        <button type="button" aria-label="Underline options" className="w-[7px] h-6 flex items-center justify-center"><Caret /></button>
        <Separator />
        <Tools items={FORMATTING} />
      </div>

      <div className="flex flex-1 min-h-0">
        <div className="flex flex-col flex-1 min-w-0">
          <div className="flex items-center h-[27px] pl-[2px] mb-0.5 shrink-0">
            <Combo label="Name box" value="A1:N1" width="w-[108px]" />
            <Separator wide />
            <button type="button" aria-label="Function wizard" className="w-[15px] font-['Liberation_Serif',serif] text-[14px] leading-4 italic text-[#2f8fd3]">fx</button>
            <button type="button" aria-label="Select function" className="w-[26px] flex items-center justify-center gap-1">
              <svg viewBox="0 0 10 12" className="w-[10px] h-3 shrink-0" fill="none" stroke={INK} aria-hidden="true"><path d="M9.500 3V.500H.500L5.500 6l-5 5.500h9V9" /></svg>
              <Caret />
            </button>
            <button type="button" aria-label="Formula" className="w-[15px] flex items-center justify-center">
              <svg viewBox="0 0 8 8" className="size-2" stroke="#444" strokeWidth="1.500" aria-hidden="true"><path d="M0 2h8M0 6h8" /></svg>
            </button>
            <input
              aria-label="Input line"
              defaultValue="Saisie des ventes ouvrant droit à commission"
              className="flex-1 h-[17px] px-[3px] bg-white border border-[#cdcbc9] text-[9px] text-[#3d4244] outline-none"
            />
            <button type="button" aria-label="Expand formula bar" className="w-4 flex justify-center"><Caret className="w-[7px] h-[4px] text-[#222]" /></button>
          </div>
          <div className="flex flex-1 min-h-0">
            <div className="flex-1 min-w-0 h-full">
              <Sheet />
            </div>
            <div className="w-[9px] bg-[#cdcdcd] px-[2px] pt-[2px]">
              <div className="h-[48%] rounded-full bg-[#7f7f7f]" />
            </div>
          </div>
          <div className="flex h-[10px] shrink-0 pr-[10px]">
            <div className="flex-1 flex items-center justify-between bg-[#cdcdcd] px-[2px]">
              <div className="w-[47%] h-[6px] rounded-full bg-[#7f7f7f]" />
              <div className="w-[2px] h-[7px] bg-[#666]" />
            </div>
          </div>
          <SheetTabs current={tab} onSelect={setTab} />
        </div>
        <aside className="relative w-[39px] shrink-0 border-l border-[#d3d1cf]">
          {["hamburger", "properties", "styles", "gallery", "navigator"].map((name) => (
            <button key={name} type="button" aria-label={name} className="w-full h-[29px] flex items-center justify-center">
              <Icon name={name} className="w-[15px] h-[15px]" />
            </button>
          ))}
          <button type="button" className="w-full h-[29px] font-['Liberation_Serif',serif] text-[17px] italic text-[#2f8fd3]">fx</button>
          <button type="button" aria-label="Hide sidebar" className="absolute left-0 top-1/2 -translate-y-1/2 w-1 h-[50px] bg-[#949494] flex items-center justify-center">
            <svg viewBox="0 0 4 6" className="w-[3px] h-[5px]" fill="#fff" aria-hidden="true"><path d="M0 0l4 3-4 3z" /></svg>
          </button>
        </aside>
      </div>

      <StatusBar />
    </div>
  );
}
